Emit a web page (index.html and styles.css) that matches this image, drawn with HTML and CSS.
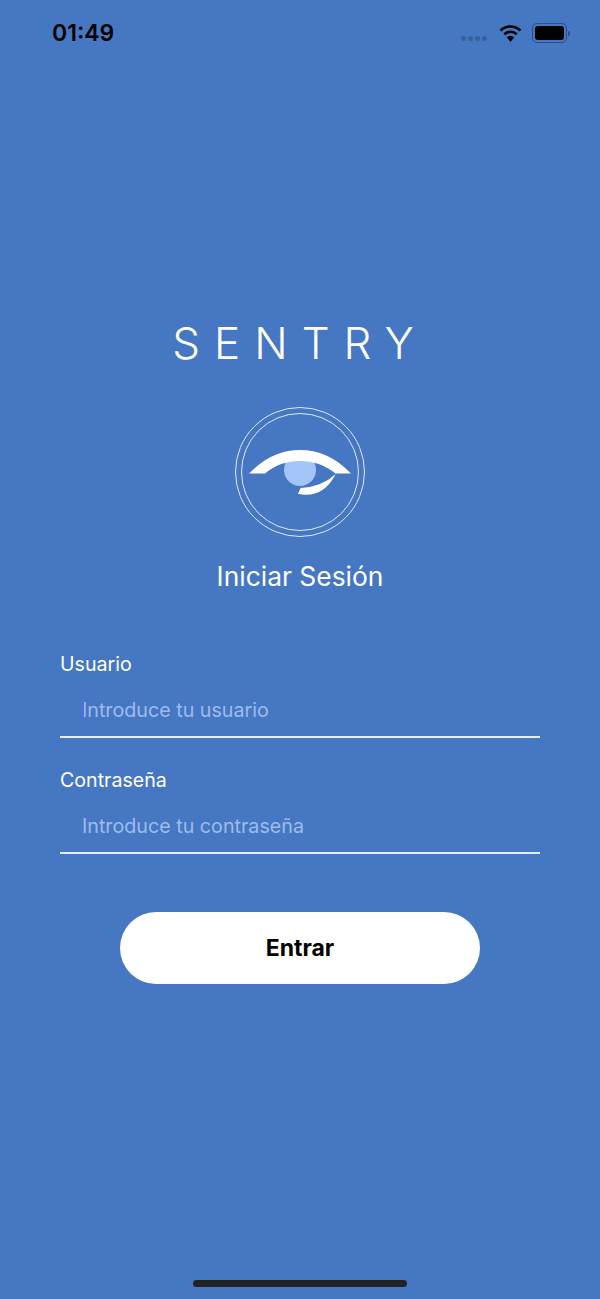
FILE: index.html
```html
<!DOCTYPE HTML>
<html lang="es">

<head>
	<meta charset="UTF-8">
	<title>Sentry</title>

	<link rel="stylesheet" href="styles.css">

</head>

<body>
	<div class="status-bar">
		<span class="time">01:49</span>
		<div class="status-icons">
			<div class="signal"><i></i><i></i><i></i><i></i></div>
			<svg class="wifi" width="23" height="18" viewBox="0 0 22 17">
				<path d="M1.5 6A14 14 0 0 1 20.5 6" fill="none" stroke="#000" stroke-width="2.6"/>
				<path d="M5 9.6A9 9 0 0 1 17 9.6" fill="none" stroke="#000" stroke-width="2.6"/>
				<path d="M11 17 7.4 12.6A5.6 5.6 0 0 1 14.6 12.6Z" fill="#000"/>
			</svg>
			<div class="battery"><div class="battery-fill"></div></div>
			<div class="battery-cap"></div>
		</div>
	</div>

	<main class="login">
		<h1 class="brand">SENTRY</h1>

		<svg class="logo" width="130" height="130" viewBox="0 0 130 130">
			<circle cx="65" cy="65" r="64.5" fill="none" stroke="#dfe9f8"/>
			<circle cx="65" cy="65" r="58.5" fill="none" stroke="#dfe9f8"/>
			<circle cx="65" cy="63" r="16" fill="#a3c5f7"/>
			<path d="M14 66.5C30 50 47 43 65 43C83 43 100 50 116 66.5H100.500C90 58 78 54 65 54C52 54 40 58 30 66.5Z" fill="#fff"/>
			<path d="M100.700 67Q86.800 80 65.600 81L63 87Q88 92 100.700 67Z" fill="#fff"/>
		</svg>

		<h2 class="heading">Iniciar Sesión</h2>

		<form class="form">
			<div class="field">
				<label class="field-label" for="usuario">Usuario</label>
				<input class="field-input" id="usuario" type="text" placeholder="Introduce tu usuario">
				<div class="caret"></div>
			</div>
			<div class="field">
				<label class="field-label" for="clave">Contraseña</label>
				<input class="field-input" id="clave" type="text" placeholder="Introduce tu contraseña">
			</div>
			<button class="submit" type="button">Entrar</button>
		</form>
	</main>

	<div class="home-indicator"></div>
</body>

</html>
```

FILE: styles.css
```css
html, body {
  margin: 0;
  padding: 0;
}

body {
  position: relative;
  height: 1299px;
  overflow: hidden;
  background-color: #4677c2;
  color: #fff;
  font-family: Inter, "Noto Sans", sans-serif;
}

.status-bar {
  display: flex;
  justify-content: space-between;
  align-items: center;
  height: 66px;
  padding: 0 30px 0 52px;
}

.time {
  color: #000;
  font-size: 23px;
  font-weight: 600;
}

.status-icons {
  display: flex;
  align-items: center;
}

.signal {
  display: flex;
  gap: 2px;
  margin: 11px 12px 0 0;
}

.signal i {
  width: 5px;
  height: 5px;
  border-radius: 50%;
  background-color: #375f9e;
}

.wifi {
  margin-right: 10px;
}

.battery {
  width: 29px;
  height: 14px;
  padding: 2px;
  border: 1px solid #2b4f86;
  border-radius: 5px;
}

.battery-fill {
  height: 100%;
  border-radius: 3px;
  background-color: #000;
}

.battery-cap {
  width: 2px;
  height: 5px;
  margin-left: 1px;
  border-radius: 0 2px 2px 0;
  background-color: #2b4f86;
}

.login {
  display: flex;
  flex-direction: column;
  align-items: center;
  padding-top: 250px;
}

.brand {
  margin: 0;
  font-size: 44px;
  font-weight: 350;
  line-height: 54px;
  letter-spacing: 14px;
}

.logo {
  display: block;
  margin-top: 37px;
}

.heading {
  margin: 20px 0 0;
  font-size: 26.4px;
  font-weight: 400;
  line-height: 38px;
}

.form {
  display: flex;
  flex-direction: column;
  width: 480px;
  margin-top: 54px;
}

.field {
  position: relative;
  height: 116px;
}

.field-label {
  display: block;
  font-size: 19.6px;
  line-height: 30px;
}

.field-input {
  display: block;
  box-sizing: border-box;
  width: 100%;
  height: 59px;
  padding: 4px 22px 0;
  border: none;
  border-bottom: 2px solid #e8eef8;
  outline: none;
  background: transparent;
  color: #fff;
  font-family: inherit;
  font-size: 19.7px;
}

.field-input::placeholder {
  color: #9dbcee;
  opacity: 1;
}

.caret {
  position: absolute;
  left: 22px;
  top: 50px;
  width: 2px;
  height: 22px;
  background-color: #4f6fe8;
}

.submit {
  align-self: center;
  width: 360px;
  height: 72px;
  margin-top: 31px;
  border: none;
  border-radius: 36px;
  background-color: #fff;
  color: #000;
  font-family: inherit;
  font-size: 23px;
  font-weight: 700;
}

.home-indicator {
  position: absolute;
  left: 193px;
  bottom: 12px;
  width: 214px;
  height: 7px;
  border-radius: 4px;
  background-color: #222;
}
```
